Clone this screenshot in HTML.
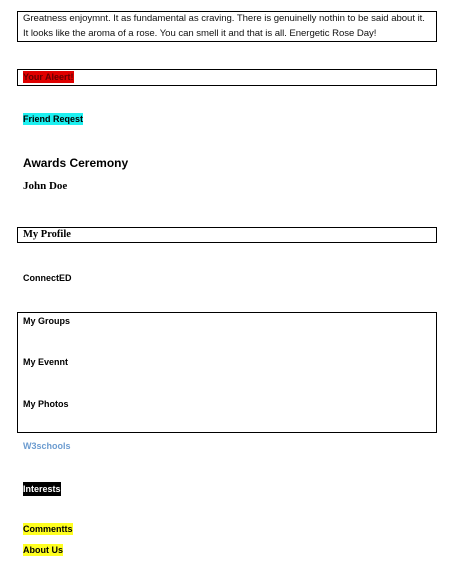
<!DOCTYPE html>
<html><head><style>
body{margin:0;width:473px;height:577px;background:#fff;font-family:"Liberation Sans",sans-serif;position:relative;overflow:hidden}
.a{position:absolute;left:23px;font-size:9px;font-weight:bold;line-height:12px;white-space:nowrap}
.box{position:absolute;left:17px;width:418px;border:1px solid #000}
</style></head><body>
<div class="box" style="top:11px;height:29px"></div>
<div class="a" style="top:11px;font-weight:normal;font-size:9.6px;line-height:15px;letter-spacing:-0.05px;color:#111">Greatness enjoymnt. It as fundamental as craving. There is genuinelly nothin to be said about it.<br>It looks like the aroma of a rose. You can smell it and that is all. Energetic Rose Day!</div>
<div class="box" style="top:69px;height:15px"></div>
<div class="a" style="top:71px;background:#e00000;color:#600;">Your Aleert!</div>
<div class="a" style="top:113px;background:#1ef0f0;">Friend Reqest</div>
<div class="a" style="top:155px;font-size:12px;line-height:16px">Awards Ceremony</div>
<div class="a" style="top:179px;font-family:'Liberation Serif',serif;font-size:11px;line-height:14px">John Doe</div>
<div class="box" style="top:227px;height:14px"></div>
<div class="a" style="top:228px;font-family:'Liberation Serif',serif;font-size:10.5px;line-height:13px">My Profile</div>
<div class="a" style="top:272px">ConnectED</div>
<div class="box" style="top:312px;height:119px"></div>
<div class="a" style="top:315px">My Groups</div>
<div class="a" style="top:356px">My Evennt</div>
<div class="a" style="top:398px">My Photos</div>
<div class="a" style="top:440px;color:#6c9cd0">W3schools</div>
<div class="a" style="top:482px;background:#000;color:#fff;padding:1px 0">Interests</div>
<div class="a" style="top:523px;background:#ffff20;">Commentts</div>
<div class="a" style="top:544px;background:#ffff20;">About Us</div>
</body></html>
